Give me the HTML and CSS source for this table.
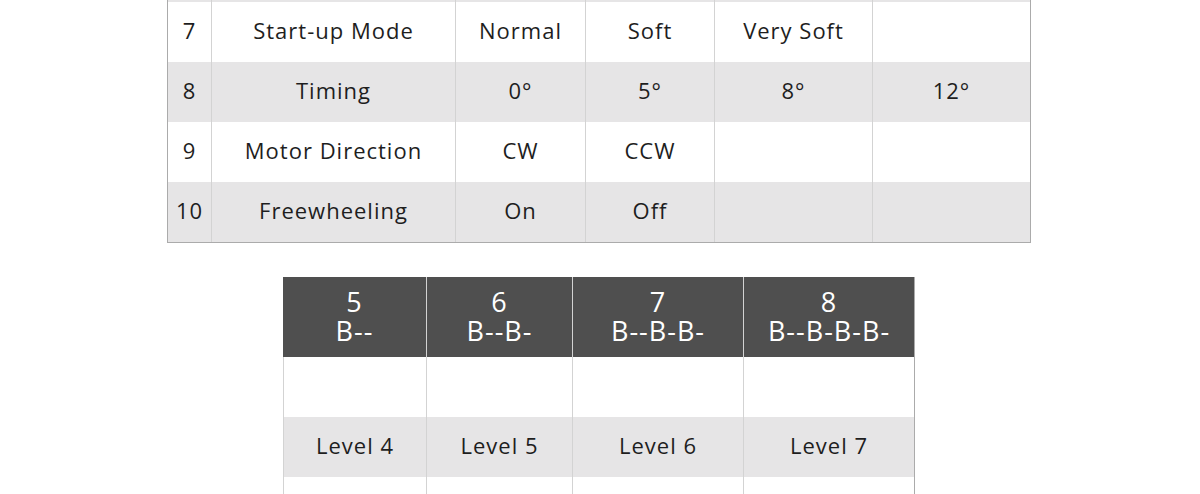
FILE: index.html
```html
<!DOCTYPE html>
<html lang="en">
<head>
<meta charset="utf-8">
<title>ESC settings</title>
<link rel="stylesheet" href="styles.css">
</head>
<body>
<div class="page">
  <div class="grid settings">
    <div class="cell first cut"></div><div class="cell cut"></div><div class="cell cut"></div><div class="cell cut"></div><div class="cell cut"></div><div class="cell cut"></div>

    <div class="cell first">7</div><div class="cell">Start-up Mode</div><div class="cell">Normal</div><div class="cell">Soft</div><div class="cell">Very Soft</div><div class="cell"></div>

    <div class="cell first alt">8</div><div class="cell alt">Timing</div><div class="cell alt">0°</div><div class="cell alt">5°</div><div class="cell alt">8°</div><div class="cell alt">12°</div>

    <div class="cell first">9</div><div class="cell">Motor Direction</div><div class="cell">CW</div><div class="cell">CCW</div><div class="cell"></div><div class="cell"></div>

    <div class="cell first alt">10</div><div class="cell alt">Freewheeling</div><div class="cell alt">On</div><div class="cell alt">Off</div><div class="cell alt"></div><div class="cell alt"></div>
  </div>

  <div class="grid levels">
    <div class="cell head first"><span>5</span><span>B--</span></div>
    <div class="cell head"><span>6</span><span>B--B-</span></div>
    <div class="cell head"><span>7</span><span>B--B-B-</span></div>
    <div class="cell head"><span>8</span><span>B--B-B-B-</span></div>

    <div class="cell first"></div><div class="cell"></div><div class="cell"></div><div class="cell"></div>

    <div class="cell first alt">Level 4</div><div class="cell alt">Level 5</div><div class="cell alt">Level 6</div><div class="cell alt">Level 7</div>

    <div class="cell first"></div><div class="cell"></div><div class="cell"></div><div class="cell"></div>
  </div>
</div>
</body>
</html>
```

FILE: styles.css
```css
html, body {
  margin: 0;
  padding: 0;
  background: #ffffff;
}

body {
  font-family: "Open Sans", "Noto Sans", sans-serif;
  color: #1e1e1e;
  overflow: hidden;
}

.page {
  width: 1200px;
  height: 494px;
  overflow: hidden;
}

.grid {
  display: grid;
  box-sizing: border-box;
}

.cell {
  box-sizing: border-box;
  height: 60px;
  display: flex;
  align-items: center;
  justify-content: center;
  font-size: 22px;
  letter-spacing: 1px;
  line-height: 30px;
  padding-bottom: 4px;
  border-left: 1px solid #d3d3d3;
  background: #ffffff;
}

.cell.first {
  border-left: none;
}

.cell.alt {
  background: #e6e5e6;
}

.cell.cut {
  height: 2px;
  padding: 0;
  background: #e6e5e6;
}

.settings {
  margin-left: 167px;
  width: 864px;
  grid-template-columns: 43px 244px 130px 129px 158px 158px;
  border-left: 1px solid #ababab;
  border-right: 1px solid #ababab;
  border-bottom: 1px solid #ababab;
}

.levels {
  margin-top: 34px;
  margin-left: 283px;
  width: 632px;
  grid-template-columns: 143px 146px 171px 171px;
  border-right: 1px solid #ababab;
}

.levels .cell.first {
  border-left: 1px solid #d3d3d3;
}

.cell.head {
  height: 80px;
  flex-direction: column;
  background: #4f4f4f;
  color: #ffffff;
  font-size: 27px;
  letter-spacing: 1px;
  line-height: 29px;
  padding-bottom: 3px;
}

.cell.head.first {
  border-left: none;
}
```
